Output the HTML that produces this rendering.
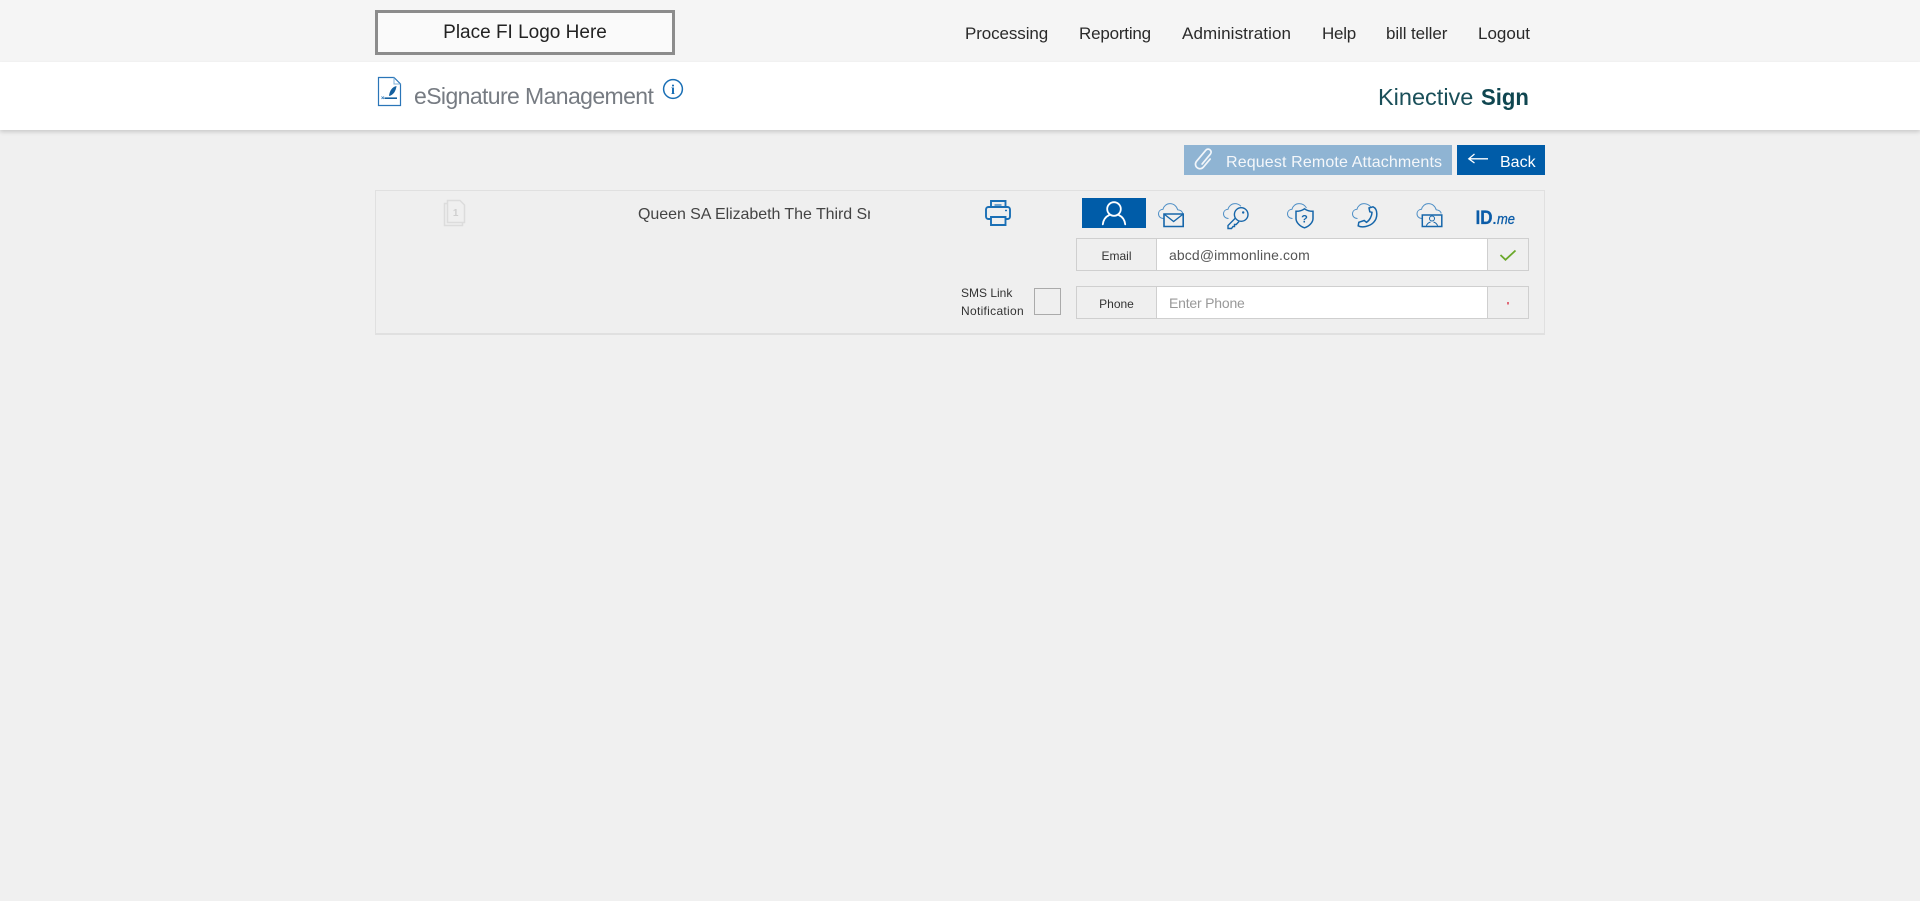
<!DOCTYPE html>
<html lang="en">
<head>
<meta charset="utf-8">
<title>eSignature Management</title>
<style>
html,body{margin:0;padding:0;width:1920px;height:901px;overflow:hidden;background:#f0f0f0;font-family:"Liberation Sans",Arial,sans-serif}
.a{position:absolute;white-space:nowrap}
.box{position:absolute;box-sizing:border-box}
svg{position:absolute;left:0;top:0;overflow:visible}
.nav{position:absolute;top:24px;font-size:17px;line-height:20px;color:#2a2a2a;white-space:nowrap;text-decoration:none}
</style>
</head>
<body>
<div class="box" style="left:0;top:0;width:1920px;height:62px;background:#f5f5f5"></div>
<div class="box" style="left:0;top:62px;width:1920px;height:68px;background:#fff;box-shadow:0 2px 4px rgba(0,0,0,.16)"></div>

<div class="box" style="left:375px;top:10px;width:300px;height:45px;border:3px solid #8c8c8c;background:#fafafa"></div>
<div class="a" style="left:375px;width:300px;text-align:center;top:21px;font-size:19px;line-height:24px;color:#222">Place FI Logo Here</div>

<a class="nav" style="left:965px;letter-spacing:-.1px">Processing</a>
<a class="nav" style="left:1079px;letter-spacing:-.2px">Reporting</a>
<a class="nav" style="left:1182px;letter-spacing:.1px">Administration</a>
<a class="nav" style="left:1322px;letter-spacing:-.25px">Help</a>
<a class="nav" style="left:1386px;letter-spacing:-.1px">bill teller</a>
<a class="nav" style="left:1478px">Logout</a>

<div class="a" style="left:414px;top:81px;font-size:23px;line-height:30px;letter-spacing:-.6px;color:#767b82">eSignature Management</div>
<div class="a" style="left:1378px;top:82px;font-size:23.5px;line-height:30px;color:#1a4f59">Kinective</div>
<div class="a" style="left:1481px;top:82px;font-size:23px;line-height:30px;font-weight:700;color:#0f4650;transform:scaleX(.96);transform-origin:0 0">Sign</div>

<div class="box" style="left:1184px;top:145px;width:268px;height:30px;background:#8fb4d3"></div>
<div class="a" style="left:1226px;top:153px;font-size:16px;line-height:20px;letter-spacing:.14px;color:#f4f7fa">Request Remote Attachments</div>
<div class="box" style="left:1457px;top:145px;width:88px;height:30px;background:#005ca8"></div>
<div class="a" style="left:1500px;top:153px;font-size:16px;line-height:20px;color:#fff">Back</div>

<div class="box" style="left:375px;top:190px;width:1170px;height:145px;border:1px solid #e0e0e0;border-bottom-width:2px;background:#efefef"></div>
<div class="a" style="left:638px;top:205px;width:232px;overflow:hidden;font-size:16px;line-height:20px;letter-spacing:-.05px;color:#444">Queen SA Elizabeth The Third Sr</div>

<div class="box" style="left:1082px;top:198px;width:64px;height:30px;background:#005ca8"></div>

<div class="box" style="left:1076px;top:238px;width:453px;height:33px;border:1px solid #cfcfcf;background:#efefef"></div>
<div class="box" style="left:1156px;top:238px;width:332px;height:33px;border:1px solid #cfcfcf;background:#fff"></div>
<div class="a" style="left:1077px;width:79px;text-align:center;top:248px;font-size:12px;line-height:16px;color:#333">Email</div>
<div class="a" style="left:1169px;top:245px;font-size:14px;line-height:20px;letter-spacing:.12px;color:#555">abcd@immonline.com</div>

<div class="box" style="left:1076px;top:286px;width:453px;height:33px;border:1px solid #cfcfcf;background:#efefef"></div>
<div class="box" style="left:1156px;top:286px;width:332px;height:33px;border:1px solid #cfcfcf;background:#fff"></div>
<div class="a" style="left:1077px;width:79px;text-align:center;top:296px;font-size:12px;line-height:16px;color:#333">Phone</div>
<div class="a" style="left:1169px;top:293px;font-size:14px;line-height:20px;letter-spacing:-.2px;color:#999">Enter Phone</div>

<div class="a" style="left:961px;top:285px;font-size:12px;line-height:16px;color:#333">SMS Link</div>
<div class="a" style="left:961px;top:303px;font-size:12px;line-height:16px;letter-spacing:.3px;color:#333">Notification</div>
<div class="box" style="left:1034px;top:288px;width:27px;height:27px;border:1px solid #aaa;background:#efefef"></div>

<svg width="1920" height="901" viewBox="0 0 1920 901" fill="none">
  <!-- document signature icon -->
  <path d="M378.500 77.500H394L400.500 84V105.500H378.500Z" stroke="#2a75b8" stroke-width="1.200"/>
  <path d="M394 77.500V84H400.500" stroke="#7fb0d8" stroke-width="1"/>
  <path d="M396.500 86C392 87 389.500 91 389 96C393 95.500 396 91 396.500 86Z" fill="#14609f"/>
  <path d="M384.500 98.200H397" stroke="#14609f" stroke-width="1.600"/>
  <path d="M381.500 96.500l2.500 2.500m0-2.500l-2.500 2.500" stroke="#2a75b8" stroke-width=".8"/>
  <!-- info -->
  <circle cx="673" cy="89" r="9.400" stroke="#1a6fb5" stroke-width="1.500"/>
  <text x="673" y="94" font-family="Liberation Serif,serif" font-size="14" font-weight="700" fill="#1a6fb5" text-anchor="middle">i</text>

  <!-- paperclip -->
  <g transform="rotate(40 1203.500 160) translate(0 -1)" stroke="#f2f6fa" stroke-width="1.700" stroke-linecap="round">
    <path d="M1208 156V166.500a4.500 4.500 0 0 1-9 0V152a3 3 0 0 1 6 0V165"/>
  </g>
  <!-- back arrow -->
  <path d="M1488 158.800H1469M1474.500 154L1468.800 158.800L1474.500 163" stroke="#fff" stroke-width="1.300"/>

  <!-- pages icon -->
  <path d="M447 203.500H444.500V225.500H462.500V222.500" stroke="#dcdcdc" stroke-width="1.500"/>
  <path d="M447.500 200.500H460L464.500 205V222.500H447.500Z" stroke="#dcdcdc" stroke-width="1.500"/>
  <text x="455.700" y="216" font-family="Liberation Sans,sans-serif" font-size="10" font-weight="700" fill="#cfcfcf" text-anchor="middle">1</text>

  <!-- printer -->
  <g stroke="#1a6fb5" stroke-width="1.900">
    <path d="M991 207V201H1005.500V207"/>
    <path d="M988.500 207H1007.500A2.500 2.500 0 0 1 1010 209.500V216.500A2.500 2.500 0 0 1 1007.500 219H988.500A2.500 2.500 0 0 1 986 216.500V209.500A2.500 2.500 0 0 1 988.500 207Z"/>
    <path d="M991 217H1005.500V225H991Z" fill="#efefef"/>
    <path d="M994.500 205H1001.500" stroke-width="1.200"/>
    <path d="M1005 210.500H1007" stroke-width="1.400"/>
  </g>

  <!-- person -->
  <circle cx="1114" cy="209" r="6.800" stroke="#fff" stroke-width="1.800"/>
  <path d="M1102.800 224.300C1103.300 219.500 1105.500 216.800 1109.300 215M1125.200 224.300C1124.700 219.500 1122.500 216.800 1118.700 215" stroke="#fff" stroke-width="1.800" stroke-linecap="round"/>

  <!-- envelope cloud -->
  <g transform="translate(1158 203)">
    <path d="M5.500 15.500C2.500 15.500 .5 13.500 .5 10.800C.5 8.300 2.300 6.500 5 6.300C5.800 3 8.500 .6 12 .6C15.700 .6 18.800 3.200 19.600 6.700C22.500 7 24.300 8.500 24.700 10.500" stroke="#4f8fc6" stroke-width="1"/>
    <path d="M6 11H25.200V23.500H6Z" stroke="#1666aa" stroke-width="1.600" fill="#efefef"/>
    <path d="M6 11L15.600 18.500L25.200 11" stroke="#1666aa" stroke-width="1.300"/>
  </g>

  <!-- key cloud -->
  <g transform="translate(1223 203)">
    <path d="M5.500 15.500C2.500 15.500 .5 13.500 .5 10.800C.5 8.300 2.300 6.500 5 6.300C5.800 3 8.500 .6 12 .6C14.500 .6 16.500 1.700 18 3.300" stroke="#4f8fc6" stroke-width="1"/>
    <path d="M13 14.500L5 22.500V25.500H8.500L10 23.500H11.500V21.500H13.200L16 18.500" stroke="#1666aa" stroke-width="1.400" fill="#efefef"/>
    <circle cx="18.200" cy="11.500" r="6.800" stroke="#1666aa" stroke-width="1.400" fill="#efefef"/>
    <circle cx="20.200" cy="9.500" r="1.200" fill="#1666aa"/>
  </g>

  <!-- shield cloud -->
  <g transform="translate(1287 203)">
    <path d="M5.500 15.500C2.500 15.500 .5 13.500 .5 10.800C.5 8.300 2.300 6.500 5 6.300C5.800 3 8.500 .6 12 .6C15.500 .6 18 2.400 19.500 5" stroke="#4f8fc6" stroke-width="1"/>
    <path d="M17.500 5.800C14.800 7.800 11.900 8.300 9 8.300V15.500C9 19.500 13 23.500 17.500 24.800C22 23.500 26 19.500 26 15.500V8.300C23 8.300 20.200 7.800 17.500 5.800Z" stroke="#1666aa" stroke-width="1.500" fill="#efefef"/>
    <text x="17.500" y="19.500" font-family="Liberation Sans,sans-serif" font-size="11" font-weight="700" fill="#1666aa" text-anchor="middle">?</text>
  </g>

  <!-- phone cloud -->
  <g transform="translate(1352 203)">
    <path d="M5.500 15.500C2.500 15.500 .5 13.500 .5 10.800C.5 8.300 2.300 6.500 5 6.300C5.800 3 8.500 .6 12 .6C15 .6 17 1.800 18.800 3.800" stroke="#4f8fc6" stroke-width="1"/>
    <path d="M17 5L21 3.800C26 6 26 15 21.500 19.500C17.500 23.500 10 25 6.200 22.800L6.800 19.300L12.200 17.500L14.500 19.300C17.500 17.500 20 13 20 9.300L17.800 8.800Z" stroke="#1666aa" stroke-width="1.500" fill="#efefef"/>
  </g>

  <!-- screen cloud -->
  <g transform="translate(1416.500 203)">
    <path d="M5.500 15.500C2.500 15.500 .5 13.500 .5 10.800C.5 8.300 2.300 6.500 5 6.300C5.800 3 8.500 .6 12 .6C15.700 .6 18.800 3.200 19.600 6.700C22.500 7 24.300 8.500 24.700 10.500" stroke="#4f8fc6" stroke-width="1"/>
    <path d="M5.800 12H25.300V23.500H5.800Z" stroke="#1666aa" stroke-width="1.500" fill="#efefef"/>
    <circle cx="15.500" cy="15.500" r="2.500" stroke="#1666aa" stroke-width="1"/>
    <path d="M10 23C10.500 20.500 12 19.800 14 19M21 23C20.500 20.500 19 19.800 17 19" stroke="#1666aa" stroke-width="1"/>
  </g>

  <!-- ID.me -->
  <text x="1475.500" y="224" font-family="Liberation Sans,sans-serif" font-size="19.500" font-weight="700" fill="#0b5ca8" stroke="#0b5ca8" stroke-width=".3" textLength="17" lengthAdjust="spacingAndGlyphs">ID</text>
  <text x="1492.500" y="224" font-family="Liberation Sans,sans-serif" font-size="14" font-weight="700" fill="#0b5ca8">.</text>
  <text x="1497" y="224" font-family="Liberation Sans,sans-serif" font-size="15" font-style="italic" fill="#0b5ca8" stroke="#0b5ca8" stroke-width=".3" textLength="18" lengthAdjust="spacingAndGlyphs">me</text>

  <!-- check and dot -->
  <path d="M1500.500 255L1505.500 259.800L1515.500 250.500" stroke="#6aa82a" stroke-width="1.800"/>
  <rect x="1507" y="302" width="2" height="2.500" fill="#e06a78"/>
</svg>
</body>
</html>
